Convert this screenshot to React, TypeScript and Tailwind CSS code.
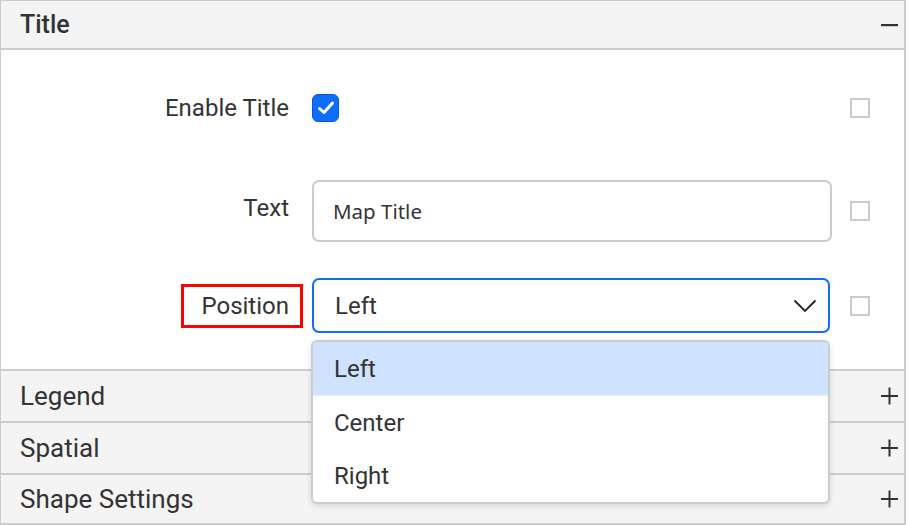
import React from "react";

const roboto = { fontFamily: "Roboto, 'Liberation Sans', sans-serif" };
const segoe = { fontFamily: "'Noto Sans', 'Open Sans', sans-serif" };

function Minus() {
  return (
    <svg width="18" height="18" viewBox="0 0 18 18" className="block">
      <rect x="0" y="8" width="17" height="2.2" fill="#333" />
    </svg>
  );
}

function Plus() {
  return (
    <svg width="18" height="18" viewBox="0 0 18 18" className="block">
      <rect x="0" y="8" width="17" height="2" fill="#333" />
      <rect x="7.5" y="0.5" width="2" height="17" fill="#333" />
    </svg>
  );
}

function SmallBox() {
  return <div className="w-[20px] h-[20px] border-2 border-[#cccccc] bg-white" />;
}

function Header({ title, open, bold, h }: { title: string; open?: boolean; bold?: boolean; h: string }) {
  return (
    <div className={`${h} shrink-0 border-b-2 border-[#cccccc] bg-[#f4f4f4] flex items-center justify-between pl-[19px] pr-[5px]`}>
      <span
        className={`${bold ? "text-[25px] font-medium" : "text-[26px] font-normal"} leading-[30px] text-[#333333]`}
        style={roboto}
      >
        {title}
      </span>
      {open ? <Minus /> : <Plus />}
    </div>
  );
}

export default function App() {
  return (
    <div className="w-[911px] h-[525px] bg-white overflow-hidden">
      <div className="w-[906px] h-[525px] border-t border-l border-r-2 border-[#cccccc] flex flex-col relative">
        <Header title="Title" open bold h="h-[49px]" />
        <div className="h-[321px] shrink-0 border-b-2 border-[#cccccc] bg-white flex flex-col pt-[30px]">
          {/* Enable Title */}
          <div className="h-[56px] flex items-center">
            <div className="w-[288px] text-right text-[24px] leading-[32px] text-[#333333]" style={roboto}>
              Enable Title
            </div>
            <div className="w-[543px] pl-[23px] flex items-center">
              <div className="w-[27px] h-[28px] rounded-[6px] bg-[#0d6efd] border border-[#0a58ca] flex items-center justify-center">
                <svg width="18" height="16" viewBox="0 0 18 16">
                  <path d="M2.5 8.5 L7 12.5 L15.5 3" stroke="white" strokeWidth="3" fill="none" strokeLinecap="round" strokeLinejoin="round" />
                </svg>
              </div>
            </div>
            <div className="pl-[18px]">
              <SmallBox />
            </div>
          </div>
          {/* Text */}
          <div className="h-[62px] mt-[44px] flex items-center">
            <div className="w-[288px] text-right text-[24px] leading-[32px] text-[#333333] -mt-[6px]" style={roboto}>
              Text
            </div>
            <div className="w-[543px] pl-[23px] h-full">
              <div className="w-[520px] h-full rounded-[7px] border-2 border-[#cccccc] flex items-center pl-[19px]">
                <span className="text-[20.5px] text-[#333333]" style={segoe}>
                  Map Title
                </span>
              </div>
            </div>
            <div className="pl-[18px]">
              <SmallBox />
            </div>
          </div>
          {/* Position */}
          <div className="h-[55px] mt-[36px] flex items-center">
            <div className="w-[288px] flex justify-end">
              <div className="relative text-[24px] leading-[32px] text-[#333333]" style={roboto}>
                Position
                <div className="absolute -left-[20px] -right-[14px] -top-[6px] -bottom-[6px] border-[3px] border-[#ff0000]" />
              </div>
            </div>
            <div className="w-[543px] pl-[23px] h-full">
              <div className="w-[518px] h-full rounded-[7px] border-2 border-[#0d6efd] flex items-center justify-between pl-[21px] pr-[11px]">
                <span className="text-[24px] leading-[32px] text-[#333333]" style={roboto}>
                  Left
                </span>
                <svg width="24" height="14" viewBox="0 0 24 14">
                  <path d="M1.5 1.5 L12 12 L22.5 1.5" stroke="#222" strokeWidth="1.8" fill="none" />
                </svg>
              </div>
            </div>
            <div className="pl-[18px]">
              <SmallBox />
            </div>
          </div>
        </div>
        <Header title="Legend" h="h-[52px]" />
        <Header title="Spatial" h="h-[52px]" />
        <Header title="Shape Settings" h="h-[50px]" />

        {/* dropdown popup */}
        <div className="absolute left-[310px] top-[339px] w-[519px] h-[164px] rounded-[6px] border-2 border-[#cccccc] bg-white overflow-hidden shadow-[0_2px_6px_rgba(0,0,0,0.12)]">
          <div className="h-[54px] bg-[#cfe2ff] flex items-center pl-[21px] border-b border-[#e8eef8]">
            <span className="text-[24px] leading-[32px] text-[#333333]" style={roboto}>Left</span>
          </div>
          <div className="h-[53px] flex items-center pl-[21px]">
            <span className="text-[24px] leading-[32px] text-[#333333]" style={roboto}>Center</span>
          </div>
          <div className="h-[53px] flex items-center pl-[21px]">
            <span className="text-[24px] leading-[32px] text-[#333333]" style={roboto}>Right</span>
          </div>
        </div>
      </div>
    </div>
  );
}
